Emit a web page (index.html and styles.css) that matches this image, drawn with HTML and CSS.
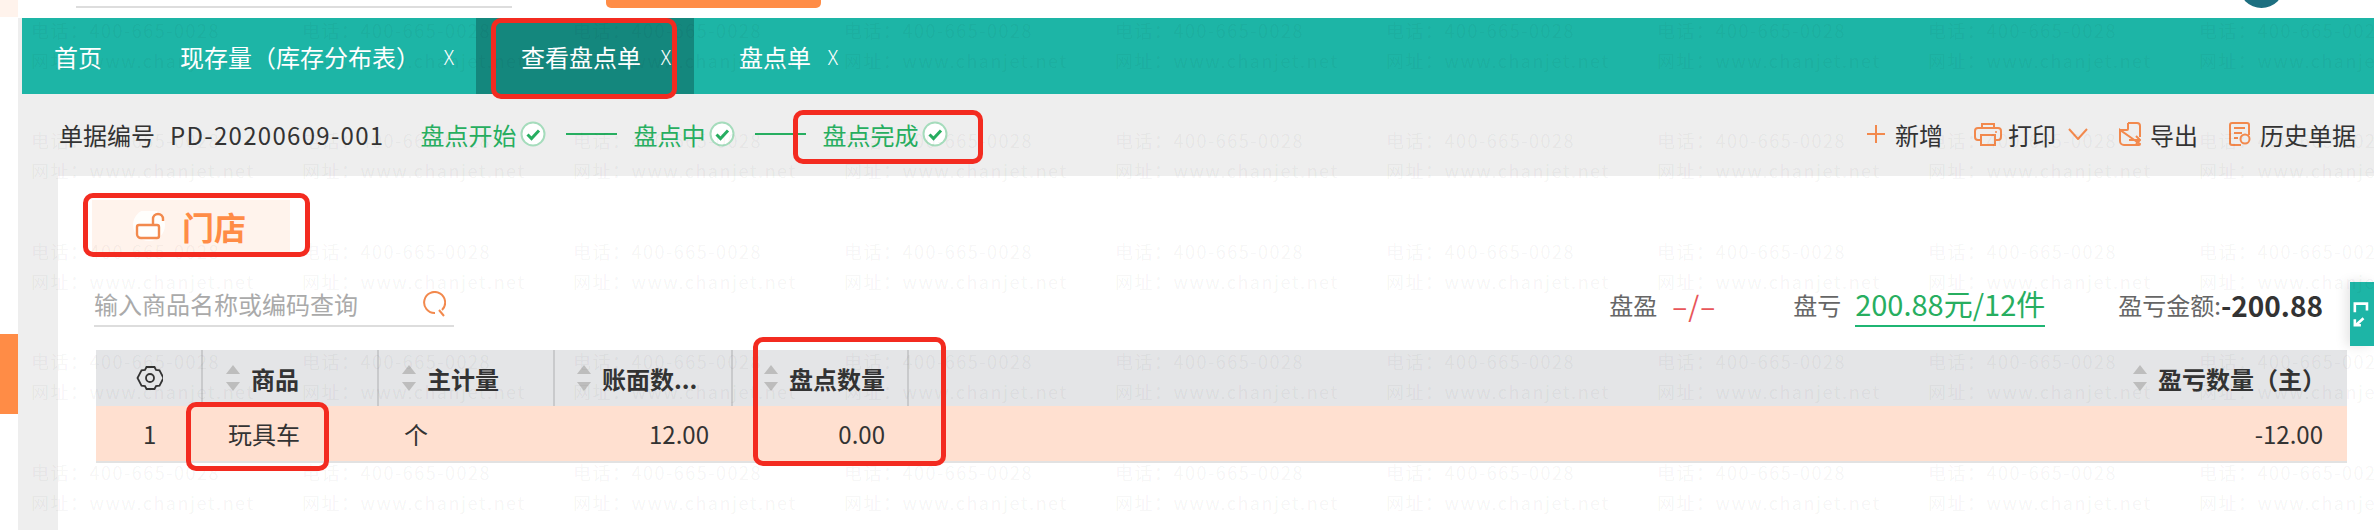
FILE: index.html
```html
<!DOCTYPE html>
<html lang="zh-CN">
<head>
  <meta charset="UTF-8" />
  <meta name="viewport" content="width=device-width, initial-scale=1.0" />
  <title>查看盘点单</title>
  <link rel="stylesheet" href="styles.css">
</head>
<body>

  <svg class="defs" width="0" height="0">
    <symbol id="check" viewBox="0 0 26 26">
      <circle cx="13" cy="13" r="11.5" fill="#fff" stroke="#a5dcbc" stroke-width="2"/>
      <path d="M7.5 13.5l4 4 7.5-8" fill="none" stroke="#27ae60" stroke-width="3"/>
    </symbol>
    <symbol id="sort" viewBox="0 0 14 26">
      <path d="M7 0l7 9H0z" fill="#bdbdbd"/>
      <path d="M0 17h14l-7 9z" fill="#bdbdbd"/>
    </symbol>
  </svg>

  <header class="topbar">
    <div class="topbar-tint"></div>
    <div class="topbar-line"></div>
    <div class="topbar-btn"></div>
    <div class="topbar-avatar"></div>
  </header>

  <div class="page">
    <aside class="rail"><div class="rail-tab"></div></aside>

    <main class="main">
      <nav class="tabs">
        <div class="tab tab-home">首页</div>
        <div class="tab">现存量（库存分布表）<span class="tab-close tab-close-far">X</span></div>
        <div class="tab tab-active">查看盘点单<span class="tab-close">X</span></div>
        <div class="tab">盘点单<span class="tab-close tab-close-near">X</span></div>
      </nav>

      <div class="bill-bar">
        <span class="bill-label">单据编号</span>
        <span class="bill-no">PD-20200609-001</span>
        <div class="steps">
          <span class="step">盘点开始<svg class="step-check"><use href="#check"/></svg></span>
          <i class="step-line"></i>
          <span class="step">盘点中<svg class="step-check"><use href="#check"/></svg></span>
          <i class="step-line"></i>
          <span class="step">盘点完成<svg class="step-check"><use href="#check"/></svg></span>
        </div>
        <div class="actions">
          <span class="action">
            <svg class="icon-plus" viewBox="0 0 18 18"><path d="M9 0v18M0 9h18" stroke="#f2894d" stroke-width="2" fill="none"/></svg>新增
          </span>
          <span class="action">
            <svg class="icon-tool" viewBox="0 0 28 24" fill="none" stroke="#f2894d" stroke-width="2"><path d="M8 6V2h12v4"/><path d="M7 18H4a3 3 0 0 1-3-3V9a3 3 0 0 1 3-3h20a3 3 0 0 1 3 3v6a3 3 0 0 1-3 3h-3"/><path d="M7 13h14v10H7z"/><circle cx="22" cy="10" r="1" fill="#f2894d" stroke="none"/></svg>打印
            <svg class="icon-chevron" viewBox="0 0 20 12"><path d="M1 1l9 10 9-10" fill="none" stroke="#f2894d" stroke-width="2"/></svg>
          </span>
          <span class="action">
            <svg class="icon-file" viewBox="0 0 22 24" fill="none" stroke="#f2894d" stroke-width="2"><path d="M9 1h9a3 3 0 0 1 3 3v11M21 22a1 1 0 0 1-1 1H5a4 4 0 0 1-4-4V8z"/><path d="M9 1v6a1 1 0 0 1-1 1H1"/><path d="M10 18h11M17 14l4 4-4 4"/></svg>导出
          </span>
          <span class="action">
            <svg class="icon-file" viewBox="0 0 22 24" fill="none" stroke="#f2894d" stroke-width="2"><path d="M12 23H3a2 2 0 0 1-2-2V3a2 2 0 0 1 2-2h15a2 2 0 0 1 2 2v10"/><path d="M5 6h11M5 11h8M5 16h4"/><circle cx="16" cy="17" r="4.5"/></svg>历史单据
          </span>
        </div>
      </div>

      <section class="panel">
        <div class="store-tag">
          <svg class="icon-lock" viewBox="0 0 36 30">
            <circle cx="16" cy="14" r="16" fill="#fff" opacity=".85"/>
            <path d="M6 14h18a2 2 0 0 1 2 2v9a2 2 0 0 1-2 2H8a4 4 0 0 1-4-4v-7a2 2 0 0 1 2-2zM20 14V8a5 5 0 0 1 10 0v2" fill="none" stroke="#f2894d" stroke-width="2.4"/>
          </svg>
          <span>门店</span>
        </div>

        <div class="filter-row">
          <div class="search">
            <span class="search-text">输入商品名称或编码查询</span>
            <svg class="icon-search" viewBox="0 0 26 26"><path d="M15 22a10.500 10.500 0 1 1 7-3M19 19l5 6" fill="none" stroke="#f2894d" stroke-width="2"/></svg>
          </div>
          <div class="summary">
            <span class="sum-label">盘盈</span>
            <span class="sum-gain">–/–</span>
            <span class="sum-label sum-loss">盘亏</span>
            <span class="sum-value">200.88元/12件</span>
            <span class="sum-label sum-total">盈亏金额:</span>
            <span class="sum-amount">-200.88</span>
          </div>
        </div>

        <div class="grid grid-head">
          <div class="cell cell-gear">
            <svg class="icon-gear" viewBox="0 0 26 26" fill="none" stroke="#333" stroke-width="1.800"><path d="M9 2h8l1.500 3 3.500.3L26 13l-4 7.700-3.500.3L17 24H9l-1.500-3-3.500-.3L0 13l4-7.700 3.500-.3z" transform="translate(1 0)"/><circle cx="13.500" cy="13" r="4"/></svg>
          </div>
          <div class="cell"><svg class="sort"><use href="#sort"/></svg>商品</div>
          <div class="cell"><svg class="sort"><use href="#sort"/></svg>主计量</div>
          <div class="cell cell-tight"><svg class="sort"><use href="#sort"/></svg>账面数...</div>
          <div class="cell cell-wide"><svg class="sort"><use href="#sort"/></svg>盘点数量</div>
          <div class="cell cell-last"><svg class="sort"><use href="#sort"/></svg>盈亏数量（主）</div>
        </div>
        <div class="grid grid-row">
          <div class="cell-data cell-num">1</div>
          <div class="cell-data">玩具车</div>
          <div class="cell-data">个</div>
          <div class="cell-data cell-right">12.00</div>
          <div class="cell-data cell-right">0.00</div>
          <div class="cell-data cell-right">-12.00</div>
        </div>
      </section>
    </main>
  </div>

  <!-- floating side button -->
  <div class="side-btn">
    <svg viewBox="0 0 24 30" fill="none" stroke="#fff" stroke-width="3"><path d="M2 13V3h14v8"/><path d="M12 20l-9 8M2 21v7h7"/></svg>
  </div>

  <!-- watermark -->
  <div class="watermark">
    <div>电话：400-665-0028<br>网址：www.chanjet.net</div>
    <div>电话：400-665-0028<br>网址：www.chanjet.net</div>
    <div>电话：400-665-0028<br>网址：www.chanjet.net</div>
    <div>电话：400-665-0028<br>网址：www.chanjet.net</div>
    <div>电话：400-665-0028<br>网址：www.chanjet.net</div>
    <div>电话：400-665-0028<br>网址：www.chanjet.net</div>
    <div>电话：400-665-0028<br>网址：www.chanjet.net</div>
    <div>电话：400-665-0028<br>网址：www.chanjet.net</div>
    <div>电话：400-665-0028<br>网址：www.chanjet.net</div>
    <div>电话：400-665-0028<br>网址：www.chanjet.net</div>
    <div>电话：400-665-0028<br>网址：www.chanjet.net</div>
    <div>电话：400-665-0028<br>网址：www.chanjet.net</div>
    <div>电话：400-665-0028<br>网址：www.chanjet.net</div>
    <div>电话：400-665-0028<br>网址：www.chanjet.net</div>
    <div>电话：400-665-0028<br>网址：www.chanjet.net</div>
    <div>电话：400-665-0028<br>网址：www.chanjet.net</div>
    <div>电话：400-665-0028<br>网址：www.chanjet.net</div>
    <div>电话：400-665-0028<br>网址：www.chanjet.net</div>
    <div>电话：400-665-0028<br>网址：www.chanjet.net</div>
    <div>电话：400-665-0028<br>网址：www.chanjet.net</div>
    <div>电话：400-665-0028<br>网址：www.chanjet.net</div>
    <div>电话：400-665-0028<br>网址：www.chanjet.net</div>
    <div>电话：400-665-0028<br>网址：www.chanjet.net</div>
    <div>电话：400-665-0028<br>网址：www.chanjet.net</div>
    <div>电话：400-665-0028<br>网址：www.chanjet.net</div>
    <div>电话：400-665-0028<br>网址：www.chanjet.net</div>
    <div>电话：400-665-0028<br>网址：www.chanjet.net</div>
    <div>电话：400-665-0028<br>网址：www.chanjet.net</div>
    <div>电话：400-665-0028<br>网址：www.chanjet.net</div>
    <div>电话：400-665-0028<br>网址：www.chanjet.net</div>
    <div>电话：400-665-0028<br>网址：www.chanjet.net</div>
    <div>电话：400-665-0028<br>网址：www.chanjet.net</div>
    <div>电话：400-665-0028<br>网址：www.chanjet.net</div>
    <div>电话：400-665-0028<br>网址：www.chanjet.net</div>
    <div>电话：400-665-0028<br>网址：www.chanjet.net</div>
    <div>电话：400-665-0028<br>网址：www.chanjet.net</div>
    <div>电话：400-665-0028<br>网址：www.chanjet.net</div>
    <div>电话：400-665-0028<br>网址：www.chanjet.net</div>
    <div>电话：400-665-0028<br>网址：www.chanjet.net</div>
    <div>电话：400-665-0028<br>网址：www.chanjet.net</div>
    <div>电话：400-665-0028<br>网址：www.chanjet.net</div>
    <div>电话：400-665-0028<br>网址：www.chanjet.net</div>
    <div>电话：400-665-0028<br>网址：www.chanjet.net</div>
    <div>电话：400-665-0028<br>网址：www.chanjet.net</div>
    <div>电话：400-665-0028<br>网址：www.chanjet.net</div>
  </div>

  <!-- red annotation boxes drawn over the screenshot -->
  <div class="mark mark-tab"></div>
  <div class="mark mark-step"></div>
  <div class="mark mark-store"></div>
  <div class="mark mark-goods"></div>
  <div class="mark mark-count"></div>

</body>
</html>
```

FILE: styles.css
```css
* {
  box-sizing: border-box;
}

html, body {
  margin: 0;
  height: 530px;
  overflow: hidden;
}

body {
  position: relative;
  font-family: "Noto Sans CJK SC", "Noto Sans", sans-serif;
  font-size: 24px;
  color: #333;
  background-color: #fff;
}

.defs {
  position: absolute;
}

/* top bar, cut off by the crop */
.topbar {
  display: flex;
  height: 18px;
  overflow: hidden;
}

.topbar-tint {
  width: 18px;
  height: 17px;
  background-color: #fff3ec;
}

.topbar-line {
  width: 436px;
  height: 2px;
  margin: 6px 0 0 58px;
  background-color: #ddd;
}

.topbar-btn {
  width: 215px;
  height: 8px;
  margin-left: 94px;
  border-radius: 0 0 5px 5px;
  background-color: #ff8c46;
}

.topbar-avatar {
  width: 45px;
  height: 45px;
  margin: -37px 0 0 1418px;
  border-radius: 50%;
  background-color: #1d6f80;
}

.page {
  display: flex;
  height: 512px;
}

.rail {
  width: 18px;
  background-color: #fff;
}

.rail-tab {
  height: 80px;
  margin-top: 316px;
  background-color: #ff8c46;
}

.main {
  display: flex;
  flex-direction: column;
  flex: 1;
  background-color: #eee;
}

/* tabs */
.tabs {
  display: flex;
  height: 76px;
  margin-left: 4px;
  color: #fff;
  background-color: #1db5a6;
}

.tab {
  display: flex;
  align-items: center;
  padding: 0 19px 0 45px;
}

.tab-home {
  padding: 0 33px 0 32px;
}

.tab-active {
  padding-right: 20px;
  background-color: #14877d;
}

.tab-close {
  width: 16px;
  margin-left: 17px;
  font-size: 20px;
  font-weight: 300;
  text-align: center;
}

.tab-close-far {
  margin-left: 21px;
}

.tab-close-near {
  margin-left: 14px;
}

/* bill bar */
.bill-bar {
  display: flex;
  align-items: center;
  height: 82px;
  padding: 0 18px 2px 41px;
}

.bill-no {
  margin-left: 15px;
  letter-spacing: 1.3px;
}

.steps {
  display: flex;
  align-items: center;
  margin-left: 36px;
  color: #27ae60;
}

.step {
  display: flex;
  align-items: center;
}

.step-check {
  width: 26px;
  height: 26px;
  margin-left: 4px;
}

.step-line {
  width: 51px;
  height: 2px;
  margin: 0 16px 0 20px;
  background-color: #27ae60;
}

.actions {
  display: flex;
  align-items: center;
  margin-left: auto;
  gap: 31px;
}

.action {
  display: flex;
  align-items: center;
}

.icon-plus {
  width: 18px;
  height: 18px;
  margin-right: 10px;
}

.icon-tool {
  width: 28px;
  height: 24px;
  margin-right: 6px;
}

.icon-chevron {
  width: 20px;
  height: 12px;
  margin-left: 12px;
}

.icon-file {
  width: 22px;
  height: 24px;
  margin-right: 9px;
}

/* panel */
.panel {
  flex: 1;
  margin-left: 40px;
  padding: 24px 27px 0 38px;
  background-color: #fff;
}

.store-tag {
  display: flex;
  align-items: center;
  width: 198px;
  height: 52px;
  margin-left: -4px;
  padding-left: 41px;
  font-size: 32px;
  font-weight: 700;
  color: #ff8c46;
  background-color: #fff3ec;
}

.icon-lock {
  width: 36px;
  height: 30px;
  margin-right: 13px;
}

.filter-row {
  display: flex;
  align-items: flex-end;
  justify-content: space-between;
  height: 45px;
  margin-top: 30px;
  padding-right: 24px;
}

.search {
  display: flex;
  align-items: center;
  justify-content: space-between;
  width: 360px;
  height: 45px;
  margin-left: -2px;
  padding-right: 8px;
  border-bottom: 2px solid #ddd;
}

.search-text {
  color: #aaa;
}

.icon-search {
  width: 26px;
  height: 26px;
}

.summary {
  display: flex;
  align-items: center;
  height: 45px;
}

.sum-label {
  color: #666;
}

.sum-gain {
  width: 48px;
  margin-left: 15px;
  font-size: 28px;
  letter-spacing: 1px;
  color: #e8565a;
}

.sum-loss {
  margin-left: 73px;
}

.sum-value {
  margin-left: 14px;
  font-size: 29px;
  line-height: 43px;
  color: #27ae60;
  border-bottom: 2px solid #1fb573;
}

.sum-total {
  margin-left: 73px;
}

.sum-amount {
  font-size: 28px;
  font-weight: 700;
}

/* table */
.grid {
  display: grid;
  grid-template-columns: 107px 176px 176px 178px 176px 1fr;
}

.grid-head {
  height: 56px;
  margin-top: 23px;
  font-weight: 700;
  background-color: #e4e5e7;
}

.cell {
  display: flex;
  align-items: center;
  padding-left: 23px;
  border-right: 2px solid #c9cacc;
}

.cell-gear {
  padding-left: 40px;
}

.cell-tight {
  padding-left: 22px;
}

.cell-wide {
  padding-left: 31px;
}

.cell-last {
  justify-content: flex-end;
  padding: 0 21px 0 0;
  border-right: none;
}

.sort {
  width: 14px;
  height: 26px;
  margin-right: 11px;
}

.icon-gear {
  width: 27px;
  height: 26px;
}

.grid-row {
  height: 57px;
  background-color: #ffe0d0;
  border-bottom: 2px solid #e2e2e2;
}

.cell-data {
  display: flex;
  align-items: center;
  padding-left: 25px;
}

.cell-num {
  padding-left: 47px;
}

.cell-right {
  justify-content: flex-end;
  padding: 0 24px 0 0;
}

/* floating */
.side-btn {
  position: absolute;
  top: 282px;
  right: 0;
  display: flex;
  align-items: center;
  width: 24px;
  height: 64px;
  padding-left: 3px;
  background-color: #1db5a6;
  box-shadow: -4px 0 12px rgba(0, 0, 0, .1);
}

.side-btn svg {
  width: 21px;
  height: 26px;
}

.watermark {
  position: absolute;
  top: 15px;
  left: 31px;
  display: grid;
  grid-template-columns: repeat(9, 271px);
  grid-auto-rows: 110.4px;
  font-size: 18px;
  line-height: 30px;
  letter-spacing: 1.5px;
  white-space: nowrap;
  color: rgba(0, 0, 0, .05);
  pointer-events: none;
}

/* red boxes */
.mark {
  position: absolute;
  border: 5px solid #f32b20;
  border-radius: 10px;
}

.mark-tab {
  top: 18px;
  left: 491px;
  width: 186px;
  height: 81px;
}

.mark-step {
  top: 110px;
  left: 793px;
  width: 190px;
  height: 54px;
}

.mark-store {
  top: 193px;
  left: 83px;
  width: 227px;
  height: 64px;
}

.mark-goods {
  top: 402px;
  left: 186px;
  width: 143px;
  height: 69px;
}

.mark-count {
  top: 337px;
  left: 753px;
  width: 193px;
  height: 129px;
}
```
